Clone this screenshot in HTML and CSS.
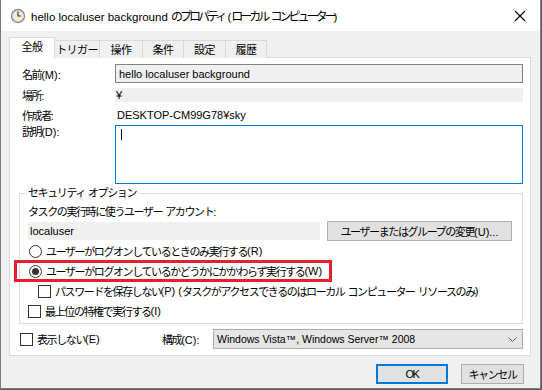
FILE: index.html
```html
<!DOCTYPE html>
<html lang="ja">
<head>
  <meta charset="UTF-8">
  <title>hello localuser background のプロパティ</title>
  <link rel="stylesheet" href="styles.css">
</head>
<body>

<div class="window">
  <div class="titlebar">
    <svg class="app-icon" width="16" height="16" viewBox="0 0 16 16">
      <circle cx="8" cy="8" r="6.5" fill="#f4ecd2" stroke="#8a8a8a" stroke-width="1.4"/>
      <circle cx="8" cy="8" r="5.2" fill="none" stroke="#d8d8d8" stroke-width="0.6"/>
      <path d="M8 3.6 V8 H11.2" fill="none" stroke="#3c3c3c" stroke-width="1.2"/>
    </svg>
    <span class="title"><span class="latin">hello localuser background </span>のプロパティ<span class="latin"> (</span>ローカル<span class="latin"> </span>コンピューター<span class="latin">)</span></span>
    <svg class="close" width="12" height="12" viewBox="0 0 12 12">
      <path d="M1 1 L11 11 M11 1 L1 11" stroke="#000" stroke-width="1.1"/>
    </svg>
  </div>

  <div class="content">
    <div class="tabs">
      <div class="tab active">全般</div>
      <div class="tab">トリガー</div>
      <div class="tab">操作</div>
      <div class="tab">条件</div>
      <div class="tab">設定</div>
      <div class="tab">履歴</div>
    </div>

    <div class="panel">
      <div class="field-row">
        <label class="field-label">名前<span class="latin">(M):</span></label>
        <div class="edit readonly latin">hello localuser background</div>
      </div>
      <div class="field-row location">
        <label class="field-label">場所<span class="latin">:</span></label>
        <div class="static-bar latin">¥</div>
      </div>
      <div class="field-row author">
        <label class="field-label">作成者<span class="latin">:</span></label>
        <div class="static latin">DESKTOP-CM99G78¥sky</div>
      </div>
      <div class="field-row desc">
        <label class="field-label">説明<span class="latin">(D):</span></label>
        <div class="edit multiline"><span class="caret"></span></div>
      </div>

      <fieldset class="group">
        <legend>セキュリティ<span class="latin"> </span>オプション</legend>
        <div class="group-text">タスクの実行時に使うユーザー<span class="latin"> </span>アカウント<span class="latin">:</span></div>
        <div class="account-row">
          <div class="account latin">localuser</div>
          <button class="btn change-btn">ユーザーまたはグループの変更<span class="latin">(U)...</span></button>
        </div>
        <div class="option"><span class="radio"></span>ユーザーがログオンしているときのみ実行する<span class="latin">(R)</span></div>
        <div class="option marked"><span class="radio checked"></span>ユーザーがログオンしているかどうかにかかわらず実行する<span class="latin">(W)</span><span class="red-box"></span></div>
        <div class="option sub"><span class="check"></span>パスワードを保存しない<span class="latin">(P) (</span>タスクがアクセスできるのはローカル<span class="latin"> </span>コンピューター<span class="latin"> </span>リソースのみ<span class="latin">)</span></div>
        <div class="option"><span class="check"></span>最上位の特権で実行する<span class="latin">(I)</span></div>
      </fieldset>

      <div class="bottom-row">
        <div class="option hide-opt"><span class="check"></span>表示しない<span class="latin">(E)</span></div>
        <label class="config-label">構成<span class="latin">(C):</span></label>
        <div class="select">
          <span class="latin">Windows Vista™, Windows Server™ 2008</span>
          <svg class="chevron" width="9" height="5" viewBox="0 0 9 5">
            <path d="M0.5 0.5 L4.5 4.5 L8.5 0.5" fill="none" stroke="#606060" stroke-width="1"/>
          </svg>
        </div>
      </div>
    </div>

    <div class="actions">
      <button class="btn ok-btn latin">OK</button>
      <button class="btn cancel-btn">キャンセル</button>
    </div>
  </div>
</div>

</body>
</html>
```

FILE: styles.css
```css
* {
  box-sizing: border-box;
}

html {
  background: #5b5b5b;
}

body {
  margin: 0;
  font-family: "Liberation Sans", "Noto Sans CJK JP", sans-serif;
  font-size: 11px;
  letter-spacing: -1.4px;
  color: #000;
}

.latin {
  letter-spacing: 0;
  white-space: pre;
}

.window {
  width: 541px;
  height: 389px;
  background: #f0f0f0;
  border: 1px solid #7c7c7c;
  border-top: none;
}

/* title bar */

.titlebar {
  height: 31px;
  background: #fff;
  display: flex;
  align-items: center;
  padding-left: 9px;
}

.app-icon {
  margin-right: 5px;
  margin-top: 1px;
}

.title {
  flex: 1;
  font-size: 12px;
  letter-spacing: -3px;
}

.title .latin {
  font-size: 11.5px;
}

.close {
  margin-right: 14px;
}

/* tabs */

.content {
  padding: 6px 9px 0 8px;
}

.tabs {
  display: flex;
  align-items: flex-end;
  height: 21px;
  position: relative;
  z-index: 1;
}

.tab {
  height: 18px;
  border: 1px solid #d9d9d9;
  border-left: none;
  border-bottom: none;
  background: #f0f0f0;
  display: flex;
  align-items: center;
  justify-content: center;
  padding-bottom: 1px;
  letter-spacing: -0.6px;
}

.tab:nth-child(2) { width: 45px; }
.tab:nth-child(3) { width: 43px; }
.tab:nth-child(4) { width: 41px; }
.tab:nth-child(5) { width: 42px; }
.tab:nth-child(6) { width: 41px; }

.tab.active {
  width: 46px;
  height: 21px;
  background: #fff;
  border-left: 1px solid #d9d9d9;
  padding-bottom: 4px;
}

/* panel */

.panel {
  background: #fff;
  border: 1px solid #d9d9d9;
  margin-top: -1px;
  height: 299px;
  padding: 6px 7px 0 9px;
}

.field-row {
  display: flex;
  align-items: center;
}

.field-label {
  width: 96px;
  padding-left: 3px;
  flex-shrink: 0;
}

.edit {
  flex: 1;
  height: 19px;
  display: flex;
  align-items: center;
  padding-left: 3px;
}

.edit.readonly {
  background: #f0f0f0;
  border: 1px solid #828282;
}

.location {
  margin-top: 4px;
}

.static-bar {
  flex: 1;
  height: 14px;
  background: #f0f0f0;
  display: flex;
  align-items: center;
  padding-left: 1px;
}

.author {
  margin-top: 4px;
  height: 16px;
}

.static {
  padding-left: 2px;
}

.desc {
  margin-top: 2px;
  align-items: flex-start;
}

.desc .field-label {
  line-height: 14px;
}

.edit.multiline {
  height: 59px;
  border: 1px solid #0078d7;
  align-items: flex-start;
  padding: 3px 0 0 5px;
}

.caret {
  display: block;
  width: 1px;
  height: 11px;
  background: #000;
}

/* security group */

.group {
  margin: 2px 0 0;
  border: 1px solid #dcdcdc;
  padding: 0 8px 2px 8px;
  min-width: 0;
}

.group legend {
  padding: 0 2px;
  margin-left: -2px;
  line-height: 14px;
}

.group-text {
  margin-top: 5px;
  line-height: 14px;
}

.account-row {
  display: flex;
  align-items: center;
  margin-top: 2px;
  height: 20px;
}

.account {
  width: 292px;
  height: 18px;
  background: #f0f0f0;
  display: flex;
  align-items: center;
  padding-left: 2px;
}

.btn {
  font: inherit;
  letter-spacing: inherit;
  color: #000;
  background: #e1e1e1;
  border: 1px solid #adadad;
  height: 20px;
  padding: 0;
  margin: 0;
}

.change-btn {
  width: 185px;
  margin-left: 7px;
}

.option {
  height: 20px;
  display: flex;
  align-items: center;
  position: relative;
}

.group .option:first-of-type {
  margin-top: 1px;
}

.radio {
  width: 13px;
  height: 13px;
  border: 1px solid #333;
  border-radius: 50%;
  background: #fff;
  margin: 0 4px 0 1px;
  display: flex;
  align-items: center;
  justify-content: center;
  flex-shrink: 0;
}

.radio.checked::after {
  content: "";
  width: 7px;
  height: 7px;
  border-radius: 50%;
  background: #333;
}

.check {
  width: 13px;
  height: 13px;
  border: 1px solid #333;
  background: #fff;
  margin-right: 4px;
  flex-shrink: 0;
}

.option.sub {
  padding-left: 10px;
}

.red-box {
  position: absolute;
  left: -14px;
  top: -1px;
  width: 318px;
  height: 22px;
  border: 3px solid #e3202b;
  pointer-events: none;
}

/* bottom row */

.bottom-row {
  display: flex;
  align-items: center;
  margin-top: 5px;
  height: 20px;
}

.hide-opt {
  width: 143px;
  padding-left: 1px;
}

.config-label {
  width: 51px;
}

.select {
  flex: 1;
  height: 20px;
  background: #e5e5e5;
  border: 1px solid #acacac;
  display: flex;
  align-items: center;
  justify-content: space-between;
  padding: 0 5px 0 3px;
}

.select .latin {
  font-size: 10.5px;
}

/* dialog buttons */

.actions {
  display: flex;
  justify-content: flex-end;
  gap: 13px;
  margin-top: 8px;
  padding-right: 7px;
}

.ok-btn {
  width: 72px;
  border: 2px solid #0078d7;
}

.cancel-btn {
  width: 63px;
}
```
